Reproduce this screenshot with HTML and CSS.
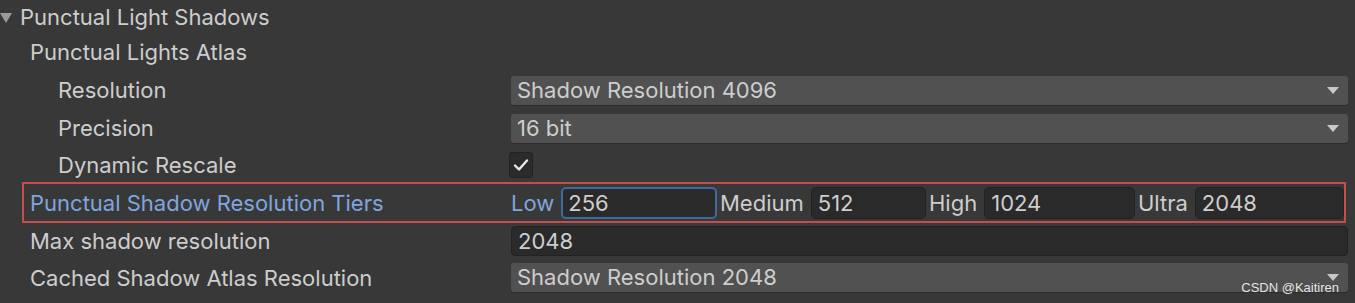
FILE: index.html
```html
<!DOCTYPE html>
<html lang="en">
<head>
  <meta charset="UTF-8">
  <title>Punctual Light Shadows</title>
  <link rel="stylesheet" href="styles.css">
</head>
<body>
  <div class="inspector">
    <div class="row title-row">
      <span class="foldout"></span>
      <span class="label">Punctual Light Shadows</span>
    </div>

    <div class="row group-row">
      <span class="label">Punctual Lights Atlas</span>
    </div>

    <div class="row">
      <span class="label indent">Resolution</span>
      <div class="dropdown">Shadow Resolution 4096<span class="arrow"></span></div>
    </div>

    <div class="row">
      <span class="label indent">Precision</span>
      <div class="dropdown">16 bit<span class="arrow"></span></div>
    </div>

    <div class="row short-row">
      <span class="label indent">Dynamic Rescale</span>
      <div class="checkbox">
        <svg width="16" height="14" viewBox="0 0 16 14">
          <path d="M2 7.5 L6 11.5 L14 2.5" fill="none" stroke="#e8e8e8" stroke-width="2.4" stroke-linecap="round" stroke-linejoin="round"/>
        </svg>
      </div>
    </div>

    <div class="row tiers-row">
      <span class="label tiers-label">Punctual Shadow Resolution Tiers</span>
      <div class="tiers">
        <div class="tier">
          <span class="tier-label active">Low</span>
          <div class="field focused">256</div>
        </div>
        <div class="tier">
          <span class="tier-label">Medium</span>
          <div class="field">512</div>
        </div>
        <div class="tier">
          <span class="tier-label">High</span>
          <div class="field">1024</div>
        </div>
        <div class="tier">
          <span class="tier-label">Ultra</span>
          <div class="field">2048</div>
        </div>
      </div>
    </div>

    <div class="row max-row">
      <span class="label">Max shadow resolution</span>
      <div class="field wide">2048</div>
    </div>

    <div class="row cached-row">
      <span class="label">Cached Shadow Atlas Resolution</span>
      <div class="dropdown">Shadow Resolution 2048<span class="arrow"></span></div>
    </div>
  </div>

  <div class="watermark">CSDN @Kaitiren</div>
</body>
</html>
```

FILE: styles.css
```css
body {
  margin: 0;
  background: #383838;
  font-family: Inter, "Noto Sans", sans-serif;
  font-size: 22px;
  color: #cdcdcd;
  overflow: hidden;
}

.inspector {
  display: flex;
  flex-direction: column;
}

.row {
  display: grid;
  grid-template-columns: 511px 1fr;
  align-items: center;
  height: 38px;
  padding-right: 7px;
}

.title-row {
  display: flex;
  height: 33px;
}

.foldout {
  width: 0;
  height: 0;
  margin: 2px 8px 0 0;
  border-left: 6.5px solid transparent;
  border-right: 6.5px solid transparent;
  border-top: 10px solid #9a9a9a;
}

.label {
  padding-left: 30px;
  white-space: nowrap;
}

.title-row .label {
  padding-left: 0;
}

.label.indent {
  padding-left: 58px;
}

.short-row {
  height: 35px;
}

.max-row {
  height: 36px;
}

.cached-row {
  height: 37px;
}

.dropdown {
  position: relative;
  height: 29px;
  line-height: 29px;
  padding-left: 6px;
  background: #515151;
  border-radius: 3px;
  box-shadow: 0 1px 0 #2c2c2c;
}

.arrow {
  position: absolute;
  right: 9px;
  top: 11px;
  width: 0;
  height: 0;
  border-left: 6.5px solid transparent;
  border-right: 6.5px solid transparent;
  border-top: 7px solid #c8c8c8;
}

.checkbox {
  width: 24px;
  height: 26px;
  margin-left: -2px;
  background: #2b2b2b;
  border: 1px solid #232323;
  border-radius: 3px;
  box-sizing: border-box;
  display: flex;
  align-items: center;
  justify-content: center;
}

.tiers-row {
  grid-template-columns: 487px 1fr;
  height: 41px;
  box-sizing: border-box;
  margin: 0 9px 0 22px;
  padding-right: 0;
  border: 2px solid #c44e4e;
}

.tiers-label {
  padding-left: 6px;
  color: #7ea6df;
}

.tiers {
  display: grid;
  grid-template-columns: repeat(4, 1fr);
  gap: 3px;
}

.tier {
  display: flex;
  align-items: center;
  gap: 7px;
}

.tier-label.active {
  color: #7ea6df;
}

.field {
  flex: 1;
  height: 32px;
  line-height: 30px;
  padding-left: 6px;
  box-sizing: border-box;
  background: #2a2a2a;
  border: 1px solid #222222;
  border-radius: 5px;
}

.field.focused {
  border: 2px solid #3d6b9c;
  line-height: 28px;
  padding-left: 5px;
}

.field.wide {
  height: 30px;
  line-height: 28px;
  border-radius: 4px;
}

.watermark {
  position: absolute;
  right: 16px;
  bottom: 8px;
  font-family: "Liberation Sans", Arial, sans-serif;
  font-size: 13px;
  color: #e6e6e6;
  text-shadow: 0 0 2px #444;
}
```
